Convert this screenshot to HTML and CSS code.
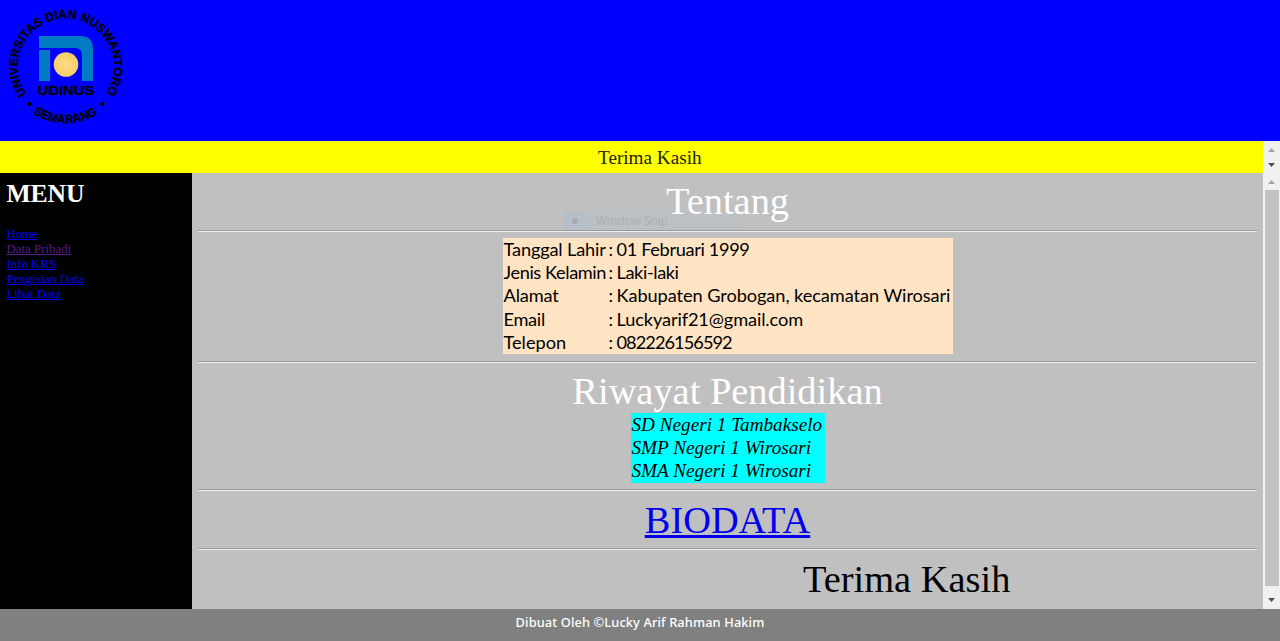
FILE: index.html
```html
<!DOCTYPE html>
<html lang="id">
<head>
<meta charset="utf-8">
<title>Data Pribadi</title>
<link rel="stylesheet" href="styles.css">
</head>
<body>
<header class="banner">
  <svg class="logo" width="140" height="141" viewBox="0 0 140 141" role="img" aria-label="Universitas Dian Nuswantoro">
    <defs>
      <path id="top-arc" d="M26.7 94A48 48 0 1 1 105.3 94"/>
      <path id="bottom-arc" d="M33.5 113.3A57 57 0 0 0 98.5 113.3"/>
      <radialGradient id="sun"><stop offset="0" stop-color="#ffdc88"/><stop offset="1" stop-color="#f7cd63"/></radialGradient>
    </defs>
    <g class="logo-text">
      <text><textPath href="#top-arc" textLength="208" lengthAdjust="spacingAndGlyphs">UNIVERSITAS DIAN NUSWANTORO</textPath></text>
      <text><textPath href="#bottom-arc" textLength="68" lengthAdjust="spacingAndGlyphs">SEMARANG</textPath></text>
      <text x="37.5" y="95" class="logo-name" textLength="57" lengthAdjust="spacingAndGlyphs">UDINUS</text>
    </g>
    <circle cx="29.5" cy="104" r="2.2"/><circle cx="102.5" cy="104" r="2.2"/>
    <path fill="#007bc4" d="M39 36H80Q93 36 93 49V81H82V55Q82 48 75 48H39ZM39 50H50V81H39Z"/>
    <circle cx="66" cy="64.5" r="12.3" fill="url(#sun)"/>
  </svg>
</header>
<div class="ticker">
  <div class="ticker-text"><span>Terima Kasih</span></div>
  <div class="scrollbar">
    <svg width="17" height="32" viewBox="0 0 17 32"><path fill="#a3a3a3" d="M5 11L8.5 7L12 11Z"/><path fill="#505050" d="M5 22H12L8.5 26Z"/></svg>
  </div>
</div>
<div class="main">
  <nav class="menu">
    <h1>MENU</h1>
    <a href="#">Home</a>
    <a href="#" class="visited">Data Pribadi</a>
    <a href="#">Info KRS</a>
    <a href="#">Pengisian Data</a>
    <a href="#">Lihat Data</a>
  </nav>
  <main class="content">
    <h2 class="about">Tentang</h2>
    <div class="snip"><i></i><span>Window Snip</span></div>
    <hr>
    <div class="data-section">
      <table class="bio">
        <tr><td><span class="k1">Tanggal Lahir</span></td><td>:</td><td><span class="v1">01 Februari 1999</span></td></tr>
        <tr><td><span class="k2">Jenis Kelamin</span></td><td>:</td><td><span class="v2">Laki-laki</span></td></tr>
        <tr><td><span class="k3">Alamat</span></td><td>:</td><td><span class="v3">Kabupaten Grobogan, kecamatan Wirosari</span></td></tr>
        <tr><td><span class="k4">Email</span></td><td>:</td><td><span class="v4">Luckyarif21@gmail.com</span></td></tr>
        <tr><td><span class="k5">Telepon</span></td><td>:</td><td><span class="v5">082226156592</span></td></tr>
      </table>
    </div>
    <hr>
    <section class="education">
      <h2>Riwayat Pendidikan</h2>
      <ul class="schools">
        <li>SD Negeri 1 Tambakselo</li>
        <li>SMP Negeri 1 Wirosari</li>
        <li>SMA Negeri 1 Wirosari</li>
      </ul>
    </section>
    <hr>
    <div class="biodata"><a href="#">BIODATA</a></div>
    <hr>
    <div class="thanks">Terima Kasih</div>
  </main>
  <div class="scrollbar tall">
    <svg width="17" height="17" viewBox="0 0 17 17"><path fill="#a3a3a3" d="M5 11L8.5 7L12 11Z"/></svg>
    <div class="thumb"></div>
    <svg width="17" height="23" viewBox="0 0 17 23"><path fill="#505050" d="M5 12H12L8.5 16Z"/></svg>
  </div>
</div>
<footer class="footer"><span>Dibuat Oleh ©Lucky Arif Rahman Hakim</span></footer>
</body>
</html>
```
FILE: styles.css
```css
* { box-sizing: border-box; }
body { margin: 0; height: 641px; overflow: hidden; display: flex; flex-direction: column; font-family: "Liberation Serif", "Times New Roman", serif; }
.banner { height: 141px; background: #00f; }
.logo { display: block; }
.logo-text { font: bold 12.4px "Liberation Sans", Arial, sans-serif; stroke: #000; stroke-width: .35px; }
.logo-name { font-size: 13px; }
.ticker { height: 32px; display: flex; background: #ff0; }
.ticker-text { flex: 1; padding: 6px 0 0 598px; font-size: 19.2px; line-height: 22px; color: #222200; }
.scrollbar { width: 17px; background: #f1f1f1; }
.scrollbar svg { display: block; }
.main { height: 436px; display: flex; }
.menu { width: 192px; background: #000; padding: 6px 6.4px; display: flex; flex-direction: column; align-items: flex-start; }
.menu h1 { margin: 0 0 18px; font-size: 25.6px; line-height: 30px; color: #fff; }
.menu a { font-size: 12.8px; line-height: 15px; letter-spacing: .04px; color: #00e; }
.menu .visited { color: #551a8b; }
.content { flex: 1; position: relative; background: silver; padding: 6px; display: flex; flex-direction: column; }
h2 { margin: 0; font-size: 38.4px; font-weight: normal; line-height: 44px; text-align: center; color: #fff; }
.about { height: 51px; position: relative; z-index: 1; }
hr { width: 100%; height: 2px; margin: 0; border: 0; border-top: 1px solid #999; border-bottom: 1px solid #eee; flex: none; }
.data-section { height: 129px; padding-top: 6px; display: flex; justify-content: center; }
.bio { width: 450px; height: 116px; background: bisque; border-collapse: collapse; table-layout: fixed; font: 18.2px/23px Lato, sans-serif; }
td { padding: 0; height: 23px; white-space: nowrap; }
td:first-child { width: 106px; padding-left: 1px; }
td:nth-child(2) { width: 8px; }
.bio span { display: inline-block; }
.k1, .k3 { letter-spacing: -.15px; }
.k2, .v2 { letter-spacing: -.4px; }
.k4 { letter-spacing: -.3px; }
.v1 { letter-spacing: -.35px; }
.v3 { letter-spacing: -.07px; }
.v4 { letter-spacing: -.12px; }
.v5 { letter-spacing: -.95px; }
.education { height: 126px; padding-top: 6px; display: flex; flex-direction: column; align-items: center; }
.schools { list-style: none; margin: 0; padding: 0 0 0 1px; width: 194px; height: 70px; background: #0ff; font-size: 19.2px; font-style: italic; line-height: 23px; white-space: nowrap; flex: none; }
.biodata { height: 57px; padding-top: 7px; text-align: center; font-size: 38.4px; line-height: 44px; }
.biodata a { color: #00e; }
.thanks { padding: 7px 0 0 605px; font-size: 38.4px; line-height: 44px; }
.snip { position: absolute; left: 372px; top: 38px; width: 173px; height: 19px; display: flex; align-items: center; background: #bbc0c4; color: #afafaf; font: 12px "Noto Sans", sans-serif; letter-spacing: -.1px; }
.snip i { width: 22px; height: 19px; background: #b6bfc7; display: flex; align-items: center; justify-content: center; }
.snip i::before { content: ""; width: 6px; height: 6px; border-radius: 50%; background: #acacac; }
.snip span { padding-left: 10px; }
.thumb { height: 396px; margin: 0 1px 0 2px; background: #c1c1c1; }
.footer { height: 32px; background: gray; color: #fff; text-align: center; font: 500 12.8px/15px "Noto Sans", sans-serif; letter-spacing: .12px; padding-top: 6px; }
```
